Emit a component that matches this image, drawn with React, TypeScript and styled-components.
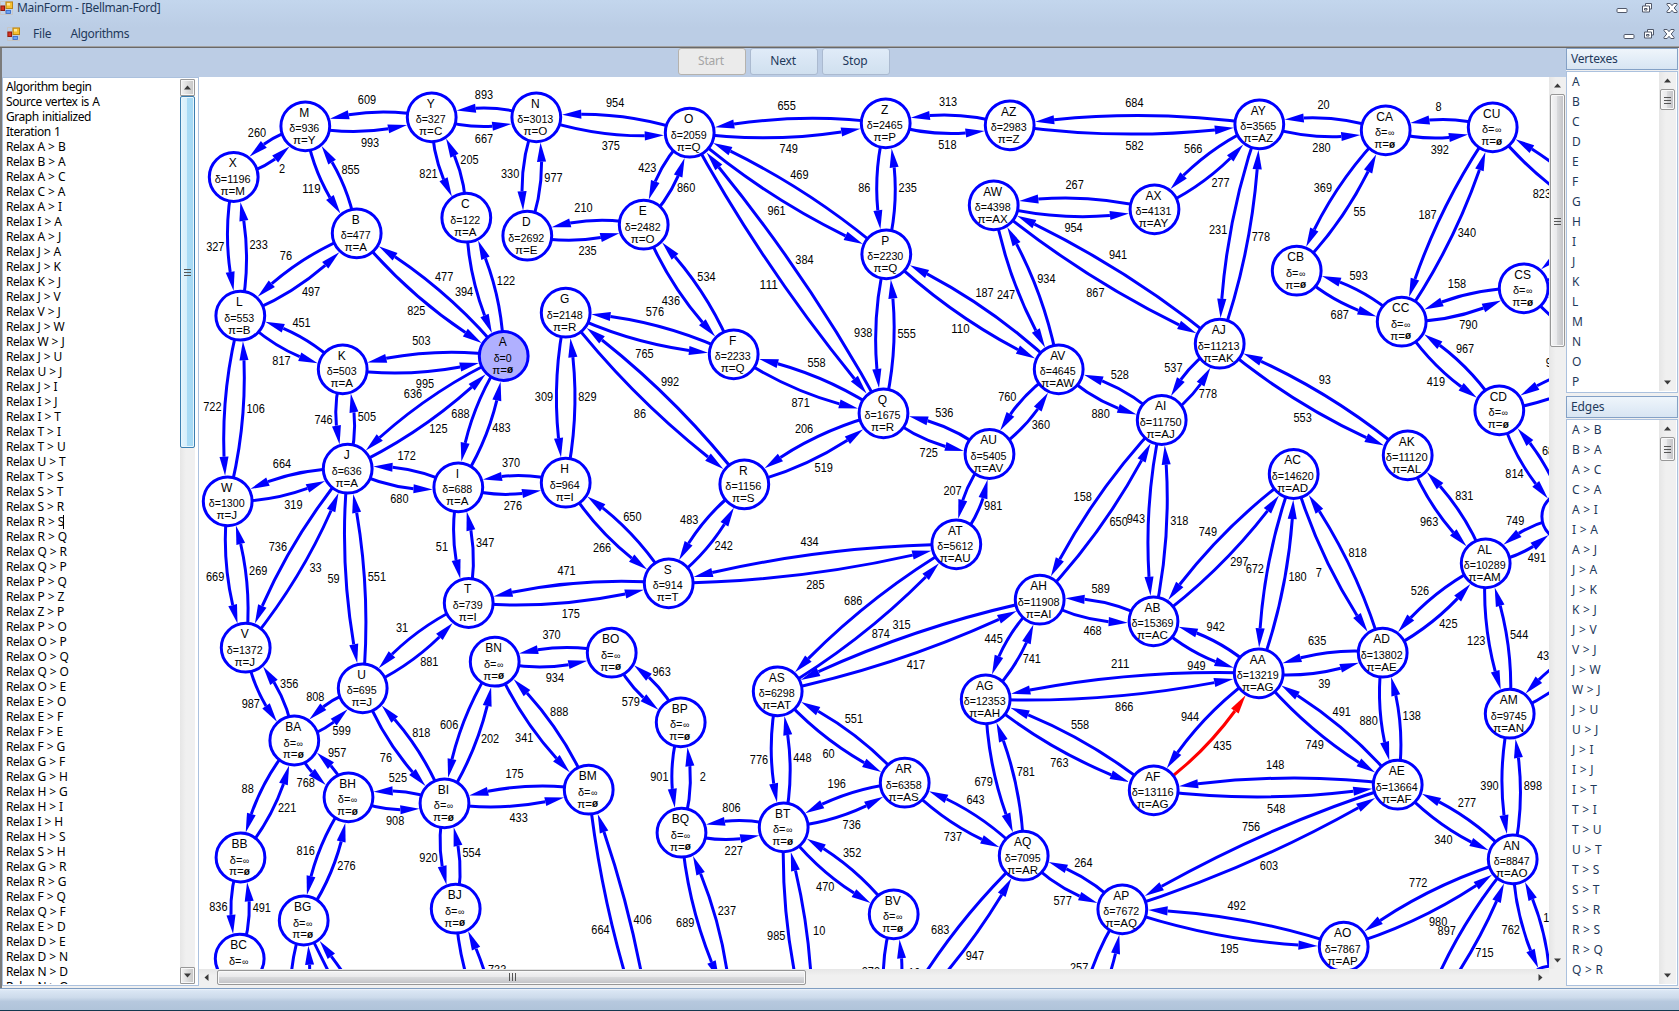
import React from "react";
import styled, { createGlobalStyle, css } from "styled-components";

const BLUE = "#0000ff";
const RED = "#ff0000";
const UI = `"Noto Sans", "Open Sans", sans-serif`;

const Global = createGlobalStyle`
  html, body { margin: 0; padding: 0; }
  body { width: 1679px; height: 1011px; overflow: hidden; background: #bccde4; font-family: ${UI}; font-size: 12px; }
  * { box-sizing: border-box; }
`;

/* ---------- graph data ---------- */

type NodeDef = [id: string, x: number, y: number, dist?: string, prev?: string];

const INF = "∞";
const NIL = "ø";

const nodes: NodeDef[] = [
  ["A", 503.7, 356, "0", NIL],
  ["B", 356.7, 233.3, "477", "A"],
  ["C", 466.3, 217.7, "122", "A"],
  ["D", 527.3, 235.7, "2692", "E"],
  ["E", 643.7, 224.7, "2482", "O"],
  ["F", 733.7, 354.3, "2233", "Q"],
  ["G", 565.7, 312.7, "2148", "R"],
  ["H", 565.7, 482.7, "964", "I"],
  ["I", 458.3, 487.3, "688", "A"],
  ["J", 347.7, 468.7, "636", "A"],
  ["K", 342.7, 369.3, "503", "A"],
  ["L", 240.3, 315.7, "553", "B"],
  ["M", 305.3, 126.3, "936", "Y"],
  ["N", 536.3, 117.3, "3013", "O"],
  ["O", 689.7, 132.7, "2059", "Q"],
  ["P", 886.3, 254.3, "2230", "Q"],
  ["Q", 883.5, 413.3, "1675", "R"],
  ["R", 744.3, 484.3, "1156", "S"],
  ["S", 668.7, 583.3, "914", "T"],
  ["T", 468.7, 603, "739", "I"],
  ["U", 362.7, 688.3, "695", "J"],
  ["V", 245.7, 647.7, "1372", "J"],
  ["W", 227.7, 501.3, "1300", "J"],
  ["X", 233.7, 177, "1196", "M"],
  ["Y", 431.7, 117.3, "327", "C"],
  ["Z", 885.7, 123.3, "2465", "P"],
  ["AA", 1258.7, 673.3, "13219", "AG"],
  ["AB", 1153.5, 621.3, "15369", "AC"],
  ["AC", 1293.7, 474, "14620", "AD"],
  ["AD", 1382.7, 652.7, "13802", "AE"],
  ["AE", 1397.7, 784.7, "13664", "AF"],
  ["AF", 1153.7, 790.3, "13116", "AG"],
  ["AG", 985.7, 699.3, "12353", "AH"],
  ["AH", 1039.7, 599.7, "11908", "AI"],
  ["AI", 1161.7, 420, "11750", "AJ"],
  ["AJ", 1219.7, 343.7, "11213", "AK"],
  ["AK", 1407.7, 455.3, "11120", "AL"],
  ["AL", 1485.7, 563.3, "10289", "AM"],
  ["AM", 1509.7, 713.7, "9745", "AN"],
  ["AN", 1512.7, 859.3, "8847", "AO"],
  ["AO", 1343.7, 946.7, "7867", "AP"],
  ["AP", 1122.3, 909.3, "7672", "AQ"],
  ["AQ", 1023.7, 855.7, "7095", "AR"],
  ["AR", 904.7, 782.7, "6358", "AS"],
  ["AS", 777.7, 691.3, "6298", "AT"],
  ["AT", 956.3, 544.3, "5612", "AU"],
  ["AU", 989.5, 454, "5405", "AV"],
  ["AV", 1058.7, 369.3, "4645", "AW"],
  ["AW", 993.7, 205.3, "4398", "AX"],
  ["AX", 1154.5, 209.3, "4131", "AY"],
  ["AY", 1259.3, 124.3, "3565", "AZ"],
  ["AZ", 1009.7, 125.3, "2983", "Z"],
  ["BA", 294.3, 740.5, INF, NIL],
  ["BB", 240.5, 857.5, INF, NIL],
  ["BC", 239.7, 958.7, INF, NIL],
  ["BG", 303.7, 920.5, INF, NIL],
  ["BH", 348.5, 797.3, INF, NIL],
  ["BI", 444.5, 803.3, INF, NIL],
  ["BJ", 455.7, 908.7, INF, NIL],
  ["BM", 588.7, 789.7, INF, NIL],
  ["BN", 494.7, 661.7, INF, NIL],
  ["BO", 611.7, 652.7, INF, NIL],
  ["BP", 680.7, 722.3, INF, NIL],
  ["BQ", 681.5, 832.7, INF, NIL],
  ["BT", 783.7, 827.3, INF, NIL],
  ["BV", 893.7, 914.3, INF, NIL],
  ["CA", 1385.7, 130.3, INF, NIL],
  ["CB", 1296.7, 270.7, INF, NIL],
  ["CC", 1401.7, 321.7, INF, NIL],
  ["CD", 1499.3, 410.3, INF, NIL],
  ["CS", 1523.7, 288.3, INF, NIL],
  ["CU", 1492.7, 127.3, INF, NIL],
  ["CE", 1566.3, 516.5],
  ["CV", 1618, 227],
  ["CR", 1627, 357],
  ["DA", 1609.5, 634],
  ["DB", 1550.5, 990.5],
  ["DC", 1418.5, 1026],
  ["DD", 296.5, 1040],
  ["DE", 461, 1176],
  ["DF", 497, 1045],
  ["DG", 654.4, 1061],
  ["DH", 730.6, 1003],
  ["DI", 811.7, 1041],
  ["DJ", 891.5, 1031],
  ["DK", 1077, 1041],
];

/* from, to, weight from->to, weight to->from */
const links = `X M 2 260;M Y 993 609;Y N 667 893;N O 375 954;O Z 749 655;Z AZ 518 313;AZ AY 582 684;AY CA 280 20;CA CU 392 8;
M B 119 855;X L 327 233;B L 76 497;B A 825 477;Y C 821 205;C A 394 122;N D 330 977;D E 235 210;O E 423 860;O P 961 469;
O Q 111 384;Z P 86 235;P Q 938 555;E F 436 534;F Q 871 558;G F 765 576;G R 86 992;G H 309 829;H S 266 650;S R 242 483;
R Q 519 206;L K 817 451;K A 995 503;K J 746 505;A J 636 125;A I 688 483;J I 680 172;I H 276 370;I T 51 347;T S 175 471;
T U 31 881;J U 59 551;J V 736 33;J W 664 319;L W 722 106;W V 669 269;V BA 987 356;U BA 808 599;BA BH 768 957;BA BB 88 221;
BB BC 836 491;BH BG 816 276;BH BI 908 525;U BI 76 818;BN BI 606 202;BN BM 341 888;BI BM 433 175;BI BJ 920 554;BN BO 934 370;
BO BP 579 963;BP BQ 901 2;BQ BT 227 806;AS BT 776 448;AS AR 60 551;BT AR 736 196;BT BV 470 352;AR AQ 737 643;AG AQ 679 781;
AQ AP 577 264;AP AO 195 492;AG AF 763 558;AG AA 866 211;AA AF 944 435;AF AE 548 148;AE AP 756 603;AE AN 340 277;AN AO 772 980;
AM AN 390 898;AL AM 123 544;AL AD 526 425;AD AE 880 138;AA AE 749 491;AA AD 39 635;AC AD 7 818;AC AA 672 180;AC AB 749 297;
AB AA 949 942;AI AB 943 318;AI AH 158 650;AH AB 468 589;AH AG 445 741;AH AS 315 417;AT AS 686 874;AT S 434 285;AU AT 207 981;
AV AU 760 360;Q AU 725 536;AV AI 880 528;AJ AI 537 778;P AV 110 187;AW AV 247 934;AW AJ 867 941;AW AX 954 267;AY AX 566 277;
AY AJ 231 778;AJ AK 553 93;AK AL 963 831;CA CB 369 55;CB CC 687 593;CU CC 187 340;CC CS 790 158;CC CD 419 967;CD CE 814 681;
AL CE 491 749;CU CV 823 0;CS CV 0 0;CS CR 0 0;CD CR 0 954;AM DA 0 431;AN DB 762 124;AN DC 897 715;BG DD 0 0;BG DE 0 0;
BJ DF 0 733;BM DG 664 406;BQ DH 689 237;BT DI 985 10;BV DJ 273 10;AQ DJ 683 947;AP DK 257 0`
  .split(";")
  .map((l) => l.trim().split(" "));

const place: Record<string, { x: number; y: number }> = {};
nodes.forEach(([id, x, y]) => (place[id] = { x, y }));

/* ---------- graph geometry ---------- */

const BEND = 18.5;
const TIP = 25.6;
const HEAD = 19;
const HALF = 4.5;
const LABEL = 21.7;

function route(from: string, to: string) {
  const a = place[from];
  const b = place[to];
  const len = Math.hypot(b.x - a.x, b.y - a.y);
  const nx = -(b.y - a.y) / len;
  const ny = (b.x - a.x) / len;
  const mx = (a.x + b.x) / 2;
  const my = (a.y + b.y) / 2;
  const cx = mx + nx * BEND;
  const cy = my + ny * BEND;
  const at = (t: number) => ({
    x: (1 - t) * (1 - t) * a.x + 2 * t * (1 - t) * cx + t * t * b.x,
    y: (1 - t) * (1 - t) * a.y + 2 * t * (1 - t) * cy + t * t * b.y,
  });
  let t = 1;
  while (t > 0 && Math.hypot(at(t).x - b.x, at(t).y - b.y) < TIP) t -= 0.002;
  const tip = at(t);
  let s = t;
  while (s > 0 && Math.hypot(at(s).x - tip.x, at(s).y - tip.y) < HEAD) s -= 0.002;
  const base = at(s);
  const ux = (tip.x - base.x) / HEAD;
  const uy = (tip.y - base.y) / HEAD;
  /* the part of the curve from the source up to the arrow base */
  const qx = a.x + (cx - a.x) * s;
  const qy = a.y + (cy - a.y) * s;
  const f = (n: number) => n.toFixed(1);
  return {
    d: `M${f(a.x)} ${f(a.y)}Q${f(qx)} ${f(qy)} ${f(base.x)} ${f(base.y)}`,
    head: `${f(tip.x)},${f(tip.y)} ${f(base.x - uy * HALF)},${f(base.y + ux * HALF)} ${f(base.x + uy * HALF)},${f(base.y - ux * HALF)}`,
    lx: mx + nx * LABEL,
    ly: my + ny * LABEL - 1.3,
  };
}

const edges = links.flatMap(([u, v, w1, w2]) => [
  { ...route(u, v), w: w1, hot: false },
  { ...route(v, u), w: w2, hot: u === "AA" && v === "AF" },
]);

/* ---------- styled parts ---------- */

const Window = styled.div`
  width: 1679px;
  height: 1011px;
  display: flex;
  flex-direction: column;
  overflow: hidden;
  color: #1e395b;
`;

const Caption = styled.header`
  height: 46px;
  flex: none;
  display: flex;
  flex-direction: column;
  background: linear-gradient(#c3d6ed, #bbcde5 60%, #bbcde5);
`;

const TitleRow = styled.div`
  height: 16px;
  flex: none;
  display: flex;
  align-items: center;
  justify-content: space-between;
  padding: 0 1px 1px 0;
`;

const MenuRow = styled.div`
  height: 30px;
  flex: none;
  display: flex;
  align-items: center;
  justify-content: space-between;
  padding: 5px 4px 0 7px;
`;

const Group = styled.div<{ $gap: number }>`
  display: flex;
  align-items: center;
  gap: ${(p) => p.$gap}px;
`;

const Label = styled.span<{ $track?: number }>`
  font: 12px/16px ${UI};
  letter-spacing: ${(p) => p.$track ?? 0}px;
  white-space: pre;
`;

const Divider = styled.div`
  height: 2px;
  flex: none;
  border-top: 1px solid #a0a0a0;
  border-bottom: 1px solid #696969;
`;

const Workspace = styled.div`
  height: 940px;
  flex: none;
  display: flex;
  border-left: 2px solid #7b7b7b;
  padding-bottom: 2px;
  background: #f0f0f0;
`;

const Main = styled.div`
  width: 1564px;
  display: flex;
  flex-direction: column;
`;

const Toolbar = styled.div`
  height: 29px;
  flex: none;
  display: flex;
  gap: 4px;
  padding-left: 676px;
  background: #bccde5;
`;

const ToolButton = styled.button<{ $disabled?: boolean }>`
  width: 68px;
  height: 27px;
  padding: 0 2px 2px 0;
  border-radius: 3px;
  font: 12px/16px ${UI};
  letter-spacing: -0.2px;
  ${(p) =>
    p.$disabled
      ? css`
          border: 1px solid #b5b2ad;
          background: #ebebeb;
          color: #a5a5a5;
        `
      : css`
          border: 1px solid #abbad0;
          background: linear-gradient(#e0ebf8, #d0e0ef);
          color: #1e395b;
        `}
`;

const Body = styled.div`
  flex: 1;
  min-height: 0;
  display: flex;
`;

const LogBox = styled.div`
  width: 197px;
  flex: none;
  display: flex;
  justify-content: space-between;
  background: #fff;
  border: 1px solid #abc1de;
  padding: 1px 3px 1px 0;
  overflow: hidden;
`;

const LogLines = styled.div`
  flex: 1;
  padding-left: 3px;
  overflow: hidden;
  color: #000;
`;

const LogLine = styled.div`
  height: 15px;
  display: flex;
  align-items: center;
  font: 12px/15px ${UI};
  letter-spacing: -0.45px;
  word-spacing: 0.7px;
  white-space: pre;
`;

const Caret = styled.i`
  width: 1px;
  height: 14px;
  margin-left: -1px;
  background: #000;
`;

const View = styled.div`
  width: 1367px;
  display: grid;
  grid-template-columns: 1350px 17px;
  grid-template-rows: 892px 17px;
`;

const Graph = styled.svg`
  display: block;
  background: #fff;
  overflow: hidden;
`;

const Weight = styled.text`
  font: 13px "Liberation Sans", Arial, sans-serif;
  text-anchor: middle;
  fill: #000;
`;

const NodeText = styled.text<{ $size: number }>`
  font: ${(p) => p.$size}px "Liberation Sans", Arial, sans-serif;
  text-anchor: middle;
  fill: #000;
`;

const Bar = styled.div<{ $row?: boolean; $w?: number }>`
  display: flex;
  flex-direction: ${(p) => (p.$row ? "row" : "column")};
  align-items: center;
  flex: none;
  ${(p) => (p.$row ? "height: 16px;" : `width: ${p.$w ?? 17}px;`)}
  background: linear-gradient(${(p) => (p.$row ? "180deg" : "90deg")}, #e6e6e6, #f0f0f0 40%);
`;

const BarButton = styled.div<{ $framed?: boolean; $row?: boolean; $inset?: number }>`
  flex: none;
  display: flex;
  align-items: center;
  justify-content: center;
  width: ${(p) => (p.$row ? 18 : 15)}px;
  height: ${(p) => (p.$row ? 16 : 17)}px;
  padding-right: ${(p) => p.$inset ?? 0}px;
  ${(p) =>
    p.$framed &&
    css`
      border: 1px solid #989898;
      border-radius: 1px;
      background: linear-gradient(90deg, #f3f3f3, #dcdcdc 50%, #c6c6c6);
      box-shadow: inset 0 0 0 1px #f7f7f7;
    `}
`;

const Spacer = styled.div`
  flex: 1;
`;

const Thumb = styled.div<{ $len: number; $row?: boolean; $hot?: boolean }>`
  flex: none;
  display: flex;
  align-items: center;
  justify-content: center;
  border-radius: 2px;
  ${(p) => (p.$row ? `width: ${p.$len}px; height: 15px;` : `width: 15px; height: ${p.$len}px;`)}
  border: 1px solid ${(p) => (p.$hot ? "#3c7fb1" : "#979797")};
  box-shadow: inset 0 0 0 1px ${(p) => (p.$hot ? "#e8f6fd" : "#f9f9f9")};
  background: linear-gradient(
    ${(p) => (p.$row ? "180deg" : "90deg")},
    ${(p) => (p.$hot ? "#e3f4fc, #d6eefb 45%, #a9dbf5 50%, #a6d9f4" : "#f5f5f5, #e9e9eb 45%, #d9dadc 50%, #c0c0c4")}
  );
`;

const Side = styled.aside`
  width: 112px;
  display: flex;
  flex-direction: column;
`;

const SideHead = styled.div`
  height: 22px;
  flex: none;
  display: flex;
  align-items: center;
  padding: 0 0 1px 4px;
  border: 1px solid #84a1c6;
  background: linear-gradient(#eff5fb, #e3edf7 50%, #d8e5f2);
`;

const SideList = styled.div<{ $h: number; $mt: number; $mb: number }>`
  height: ${(p) => p.$h}px;
  margin: ${(p) => `${p.$mt}px 0 ${p.$mb}px`};
  flex: none;
  display: flex;
  justify-content: space-between;
  border: 1px solid #abc1de;
  background: #fff;
  overflow: hidden;
  padding: 0 1px 1px 0;
`;

const SideRows = styled.div`
  flex: 1;
  overflow: hidden;
  padding-left: 5px;
`;

const SideRow = styled.div`
  height: 20px;
  font: 12px/20px ${UI};
  letter-spacing: -0.2px;
  word-spacing: 0.9px;
  white-space: pre;
`;

const Status = styled.footer`
  height: 23px;
  flex: none;
  border-top: 1px solid #7f9dc1;
  border-bottom: 1px solid #14384f;
  background: linear-gradient(#f0f5fb, #dae6f4 8%, #cddbeb 40%, #b6c8de 60%, #b0c4da);
`;

/* ---------- drawings ---------- */

const AppIcon = () => (
  <svg width="13" height="14" viewBox="0 0 13 14">
    <path d="M.5 .5h12v13h-12zM5.5 0v14M0 4.500h13" fill="none" stroke="#c9c3bd" strokeWidth=".8" />
    <rect x="6" y="1" width="6.500" height="6.500" fill="#f5bf2f" stroke="#b98415" />
    <rect x="7" y="2" width="3" height="2.500" fill="#ffe69a" />
    <rect x=".9" y="5" width="3.600" height="4.500" fill="#d9331f" stroke="#8f1a10" />
    <rect x="6" y="9.500" width="4.500" height="3" fill="#6aa2f5" stroke="#3465c4" strokeWidth=".8" />
  </svg>
);

const MinIcon = () => (
  <svg width="12" height="12" viewBox="0 0 12 12">
    <rect x="1" y="6.500" width="10" height="4" rx="1" fill="#fff" stroke="#50586a" />
  </svg>
);

const RestoreIcon = () => (
  <svg width="12" height="12" viewBox="0 0 12 12">
    <path d="M4.500 1.500h6v5.500h-2v3h-7V4h3z" fill="#fff" stroke="#50586a" />
    <path d="M4.500 4h4v3M3.500 6.500h2.500v1.500h-2.500z" fill="none" stroke="#50586a" />
  </svg>
);

const CloseIcon = () => (
  <svg width="12" height="12" viewBox="0 0 12 12">
    <path
      d="M1 1.500h3.200L6 3.700l1.800-2.200H11v1.200L8.200 6 11 9.300v1.200H7.800L6 8.300l-1.800 2.200H1V9.300L3.800 6 1 2.700z"
      fill="#fff"
      stroke="#50586a"
    />
  </svg>
);

const arrows = { up: "M0 5L3.500 1L7 5z", down: "M0 1L3.500 5L7 1z", left: "M5.500 -.5L1.500 3L5.500 6.500z", right: "M1.500 -.5L5.500 3L1.500 6.500z" };

const Arrow = ({ to }: { to: keyof typeof arrows }) => (
  <svg width="7" height="7" viewBox="0 -.5 7 7">
    <path d={arrows[to]} fill="#3a3a3a" />
  </svg>
);

const Grip = ({ row }: { row?: boolean }) => (
  <svg width="8" height="8" viewBox="0 0 8 8">
    <path d={row ? "M1.500 0v8M4.500 0v8M7.500 0v8" : "M0 1.500h7M0 4.500h7M0 7.500h7"} stroke="#555" fill="none" />
  </svg>
);

function GraphNode({ def }: { def: NodeDef }) {
  const [id, x, y, dist, prev] = def;
  const inf = dist === INF;
  return (
    <g>
      <circle cx={x} cy={y} r={24.4} fill={id === "A" ? "#b0b0ff" : "#fff"} stroke={BLUE} strokeWidth={3} />
      {dist && (
        <>
          <NodeText $size={12} x={x - 1} y={y - 9.7}>
            {id}
          </NodeText>
          {inf ? (
            <NodeText $size={11} x={x - 1} y={y + 6}>
              δ=
              <tspan fontSize="9" dx="0.5">
                {INF}
              </tspan>
            </NodeText>
          ) : (
            <NodeText $size={11} x={x - 1} y={y + 6} textLength={(dist.length + 2) * 6} lengthAdjust="spacingAndGlyphs">
              {`δ=${dist}`}
            </NodeText>
          )}
          <NodeText $size={11.6} x={x - 1} y={y + 17.9}>
            {prev === NIL ? (
              <>
                π=
                <tspan fontSize="10" fontWeight="bold" dy="-0.5">
                  {NIL}
                </tspan>
              </>
            ) : (
              `π=${prev}`
            )}
          </NodeText>
        </>
      )}
    </g>
  );
}

const steps = (
  "AB BA AC CA AI IA AJ JA JK KJ JV VJ JW WJ JU UJ JI IJ IT TI TU UT TS ST SR RS RQ QR " +
  "QP PQ PZ ZP PO OP OQ QO OE EO EF FE FG GF GH HG HI IH HS SH GR RG FQ QF ED DE DN ND NO"
)
  .split(" ")
  .map((p) => `${p[0]} > ${p[1]}`);

const log = ["Algorithm begin", "Source vertex is A", "Graph initialized", "Iteration 1", ...steps.map((s) => `Relax ${s}`)];

function SideScroll({ len }: { len: number }) {
  return (
    <Bar $w={17}>
      <BarButton>
        <Arrow to="up" />
      </BarButton>
      <Thumb $len={len}>
        <Grip />
      </Thumb>
      <Spacer />
      <BarButton>
        <Arrow to="down" />
      </BarButton>
    </Bar>
  );
}

export default function App() {
  return (
    <Window>
      <Global />
      <Caption>
        <TitleRow>
          <Group $gap={4}>
            <AppIcon />
            <Label $track={-0.32}>MainForm - [Bellman-Ford]</Label>
          </Group>
          <Group $gap={13}>
            <MinIcon />
            <RestoreIcon />
            <CloseIcon />
          </Group>
        </TitleRow>
        <MenuRow>
          <Group $gap={13}>
            <AppIcon />
            <Group $gap={19}>
              <Label $track={-0.2}>File</Label>
              <Label $track={-0.35}>Algorithms</Label>
            </Group>
          </Group>
          <Group $gap={8}>
            <MinIcon />
            <RestoreIcon />
            <CloseIcon />
          </Group>
        </MenuRow>
      </Caption>
      <Divider />
      <Workspace>
        <Main>
          <Toolbar>
            <ToolButton $disabled>Start</ToolButton>
            <ToolButton>Next</ToolButton>
            <ToolButton>Stop</ToolButton>
          </Toolbar>
          <Body>
            <LogBox>
              <LogLines>
                {log.map((line, i) => (
                  <LogLine key={i}>
                    {line}
                    {line === "Relax R > S" && <Caret />}
                  </LogLine>
                ))}
              </LogLines>
              <Bar $w={15}>
                <BarButton $framed>
                  <Arrow to="up" />
                </BarButton>
                <Thumb $len={352} $hot>
                  <Grip />
                </Thumb>
                <Spacer />
                <BarButton $framed>
                  <Arrow to="down" />
                </BarButton>
              </Bar>
            </LogBox>
            <View>
              <Graph width="1350" height="892" viewBox="199 77 1350 892">
                {edges.map((e, i) => (
                  <path key={i} d={e.d} fill="none" stroke={e.hot ? RED : BLUE} strokeWidth={3} />
                ))}
                {nodes.map((n) => (
                  <GraphNode key={n[0]} def={n} />
                ))}
                {edges.map((e, i) => (
                  <polygon key={i} points={e.head} fill={e.hot ? RED : BLUE} />
                ))}
                {edges
                  .filter((e) => e.w !== "0")
                  .map((e, i) => (
                    <Weight
                      key={i}
                      x={e.lx}
                      y={e.ly + 4.8}
                      textLength={e.w.length * 6.1}
                      lengthAdjust="spacingAndGlyphs"
                    >
                      {e.w}
                    </Weight>
                  ))}
              </Graph>
              <Bar $w={17}>
                <BarButton>
                  <Arrow to="up" />
                </BarButton>
                <Thumb $len={253}>
                  <Grip />
                </Thumb>
                <Spacer />
                <BarButton>
                  <Arrow to="down" />
                </BarButton>
              </Bar>
              <Bar $row>
                <BarButton $row $inset={3}>
                  <Arrow to="left" />
                </BarButton>
                <Thumb $row $len={589}>
                  <Grip row />
                </Thumb>
                <Spacer />
                <BarButton $row>
                  <Arrow to="right" />
                </BarButton>
              </Bar>
            </View>
          </Body>
        </Main>
        <Side>
          <SideHead>
            <Label $track={-0.2}>Vertexes</Label>
          </SideHead>
          <SideList $h={322} $mt={1} $mb={3}>
            <SideRows>
              {"ABCDEFGHIJKLMNOP".split("").map((v) => (
                <SideRow key={v}>{v}</SideRow>
              ))}
            </SideRows>
            <SideScroll len={21} />
          </SideList>
          <SideHead>
            <Label $track={-0.1}>Edges</Label>
          </SideHead>
          <SideList $h={567} $mt={1} $mb={0}>
            <SideRows>
              {steps.slice(0, 28).map((s, i) => (
                <SideRow key={i}>{s}</SideRow>
              ))}
            </SideRows>
            <SideScroll len={24} />
          </SideList>
        </Side>
      </Workspace>
      <Status />
    </Window>
  );
}
